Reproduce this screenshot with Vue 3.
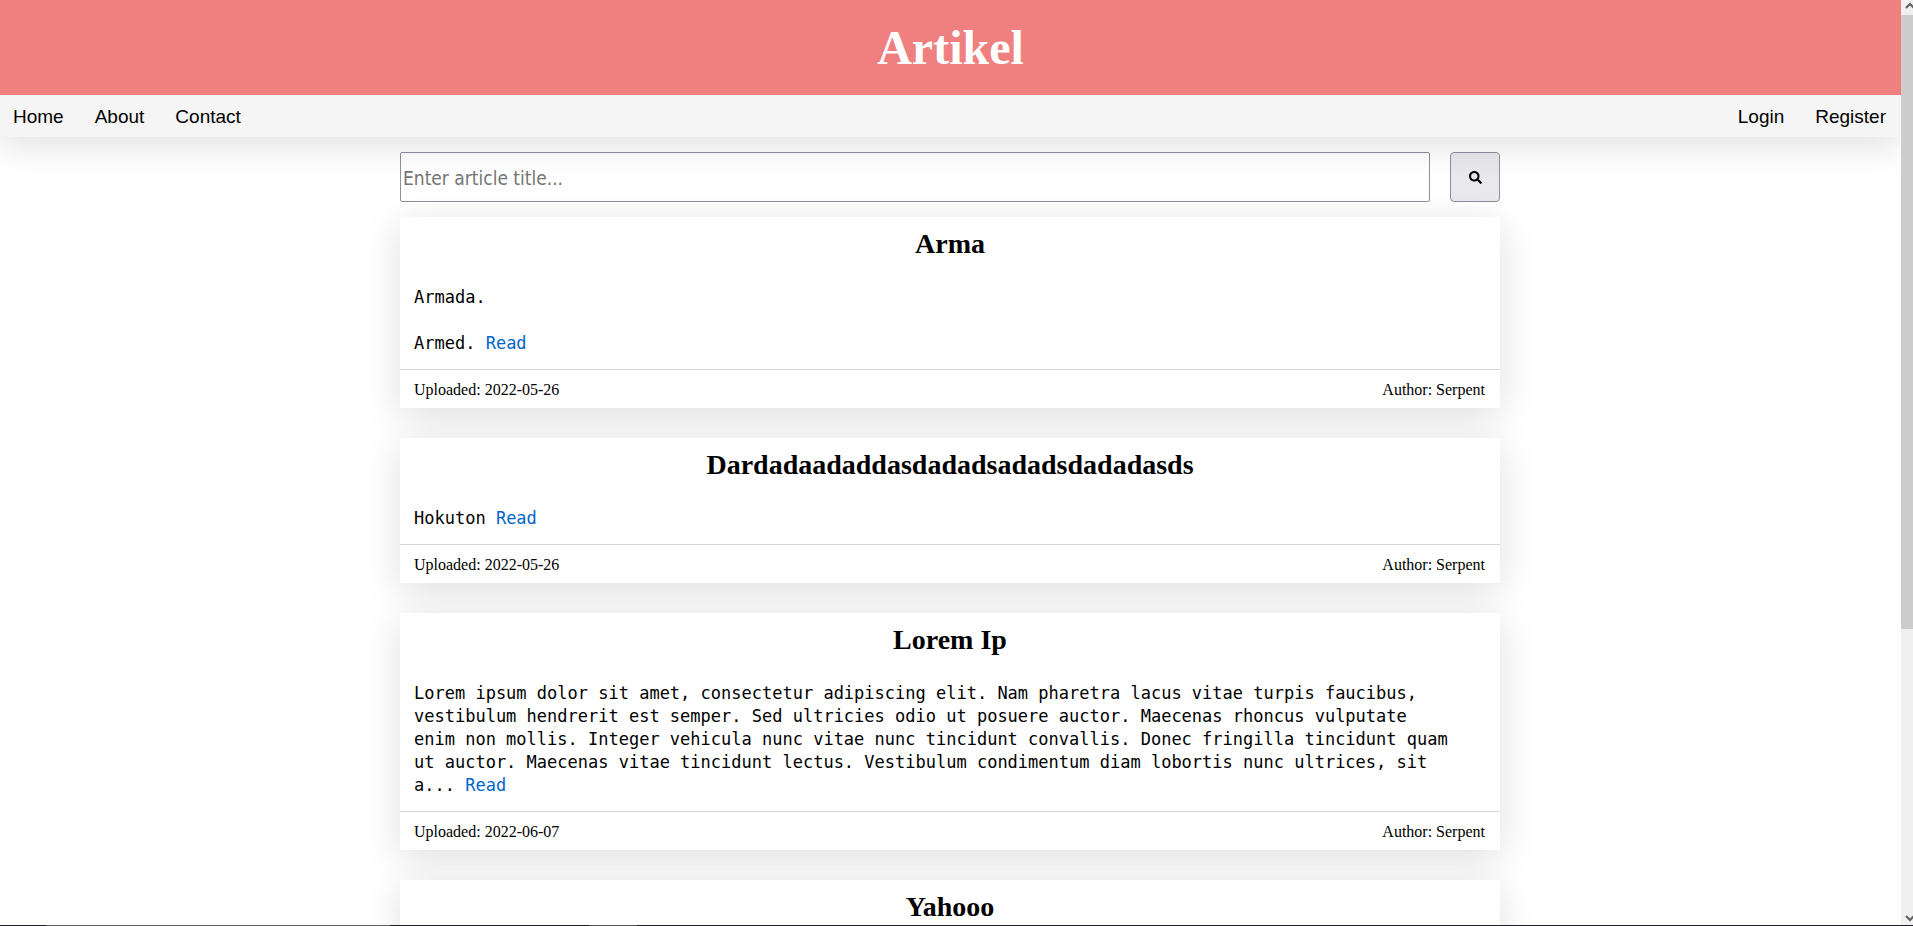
<script setup>
import { ref } from 'vue'

const query = ref('')

const mainLinks = ['Home', 'About', 'Contact']
const userLinks = ['Login', 'Register']

const articles = [
  { title: 'Arma', excerpt: 'Armada.\n\nArmed.', date: '2022-05-26', author: 'Serpent' },
  { title: 'Dardadaadaddasdadadsadadsdadadasds', excerpt: 'Hokuton', date: '2022-05-26', author: 'Serpent' },
  {
    title: 'Lorem Ip',
    excerpt:
      'Lorem ipsum dolor sit amet, consectetur adipiscing elit. Nam pharetra lacus vitae turpis faucibus,\n' +
      'vestibulum hendrerit est semper. Sed ultricies odio ut posuere auctor. Maecenas rhoncus vulputate\n' +
      'enim non mollis. Integer vehicula nunc vitae nunc tincidunt convallis. Donec fringilla tincidunt quam\n' +
      'ut auctor. Maecenas vitae tincidunt lectus. Vestibulum condimentum diam lobortis nunc ultrices, sit\n' +
      'a...',
    date: '2022-06-07',
    author: 'Serpent'
  },
  { title: 'Yahooo' }
]
</script>

<template>
  <div class="window">
    <div class="view">
      <div class="page">
        <header class="banner"><h1>Artikel</h1></header>
        <nav class="nav">
          <div class="links">
            <a v-for="name in mainLinks" :key="name" href="#">{{ name }}</a>
          </div>
          <div class="links">
            <a v-for="name in userLinks" :key="name" href="#">{{ name }}</a>
          </div>
        </nav>
        <main class="content">
          <form class="search" @submit.prevent>
            <input v-model="query" type="text" aria-label="Article title" placeholder="Enter article title..." />
            <button type="submit" aria-label="Search">
              <svg viewBox="0 0 512 512" aria-hidden="true">
                <path
                  d="M505 442.7L405.3 343c-4.5-4.5-10.6-7-17-7H372c27.6-35.3 44-79.7 44-128C416 93.1 322.9 0 208 0S0 93.1 0 208s93.1 208 208 208c48.3 0 92.7-16.4 128-44v16.3c0 6.4 2.5 12.5 7 17l99.7 99.7c9.4 9.4 24.6 9.4 33.9 0l28.3-28.3c9.4-9.4 9.4-24.6.1-34zM208 336c-70.7 0-128-57.2-128-128 0-70.7 57.2-128 128-128 70.7 0 128 57.2 128 128 0 70.7-57.2 128-128 128z"
                />
              </svg>
            </button>
          </form>
          <article v-for="item in articles" :key="item.title" class="card">
            <h2>{{ item.title }}</h2>
            <p v-if="item.excerpt">{{ item.excerpt }} <a href="#">Read</a></p>
            <footer v-if="item.date">
              <span>Uploaded: {{ item.date }}</span>
              <span>Author: {{ item.author }}</span>
            </footer>
          </article>
        </main>
      </div>
      <div class="scrollbar" aria-hidden="true">
        <svg viewBox="0 0 12 15"><path d="M5 8l4-4 4 4" /></svg>
        <div class="track"><div class="thumb"></div></div>
        <svg viewBox="0 0 12 15"><path d="M5 6l4 4 4-4" /></svg>
      </div>
    </div>
    <div class="edge"></div>
  </div>
</template>

<style>
body {
  margin: 0;
  overflow: hidden;
}
</style>

<style scoped>
.window {
  display: flex;
  flex-direction: column;
  height: 100vh;
  background: #fff;
  color: #000;
  font-family: "Liberation Serif", serif;
}
.view {
  display: flex;
  flex: 1;
  min-height: 0;
}
.page {
  flex: 1;
  min-width: 0;
  overflow: hidden;
}
.banner {
  position: relative;
  z-index: 2;
  padding: 20px;
  background: #f08080;
  color: #fff;
  text-align: center;
}
h1 {
  margin: 0;
  font-size: 48px;
  line-height: 55px;
}
.nav {
  position: relative;
  z-index: 1;
  display: flex;
  justify-content: space-between;
  padding: 11px 15px 9px 13px;
  background: #f5f5f5;
  box-shadow: 0 8px 36px rgba(0, 0, 0, 0.13);
  font-family: "Liberation Sans", sans-serif;
  font-size: 19px;
  line-height: 22px;
}
.links {
  display: flex;
  gap: 31px;
}
.links a {
  color: #000;
  text-decoration: none;
}
.content {
  display: flex;
  flex-direction: column;
  gap: 30px;
  max-width: 1100px;
  margin: 0 auto;
  padding: 15px 1px 0 0;
}
.search {
  display: flex;
  gap: 20px;
  margin-bottom: -15px;
}
.search input {
  flex: 1;
  min-width: 0;
  height: 50px;
  box-sizing: border-box;
  padding: 3px 2px 1px;
  border: 1px solid #8f8f9d;
  border-radius: 2px;
  background: #fff;
  font-family: "DejaVu Sans Condensed", "DejaVu Sans", sans-serif;
  font-size: 19px;
}
.search input::placeholder {
  color: #757575;
}
.search button {
  display: flex;
  align-items: center;
  justify-content: center;
  width: 50px;
  height: 50px;
  padding: 0;
  border: 1px solid #8f8f9d;
  border-radius: 4px;
  background: #e9e9ed;
}
.search svg {
  width: 13px;
  height: 13px;
}
.card {
  background: #fff;
  box-shadow: 0 8px 36px rgba(0, 0, 0, 0.13);
}
h2 {
  margin: 0;
  padding: 11px 14px 26px;
  font-size: 28px;
  line-height: 32px;
  text-align: center;
}
.card p {
  margin: 0;
  padding: 0 14px 14px;
  font-family: "DejaVu Sans Mono", monospace;
  font-size: 17px;
  line-height: 23px;
  white-space: pre-line;
}
.card p a {
  color: #0066cc;
  text-decoration: none;
}
.card footer {
  display: flex;
  justify-content: space-between;
  padding: 11px 15px 9px 14px;
  border-top: 1px solid #d3d3d3;
  font-size: 16px;
  line-height: 18px;
}
.scrollbar {
  display: flex;
  flex-direction: column;
  width: 12px;
  background: #f0f0f0;
}
.scrollbar svg {
  width: 12px;
  height: 15px;
  fill: none;
  stroke: #606060;
  stroke-width: 2;
}
.track {
  flex: 1;
}
.thumb {
  height: 68.6%;
  background: #cdcdcd;
}
.edge {
  height: 1px;
  background: linear-gradient(90deg, #1f1f23 46px, #606060 46px 390px, #1f1f23 390px 589px, #505050 589px 637px, #1f1f23 637px);
}
</style>
